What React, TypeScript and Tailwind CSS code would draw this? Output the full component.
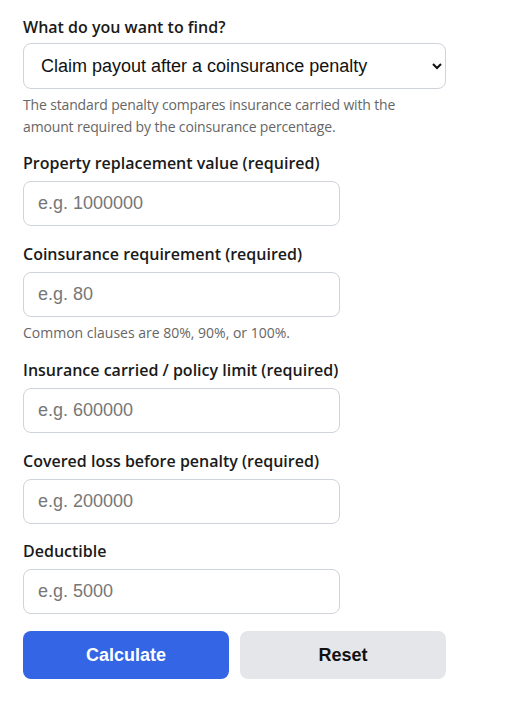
import React from "react";

const labelCls =
  "block text-[16px] leading-6 font-semibold text-[#1a1a1a] mb-1.5";
const inputCls =
  "block w-[317px] h-[45px] rounded-lg border border-[#cfd3da] bg-white px-[14px] text-[18px] text-[#111] placeholder:text-[#777] outline-none font-['Liberation_Sans',Arial,sans-serif]";
const helpCls = "text-[14px] leading-[22px] text-[#666]";

function Field({
  label,
  placeholder,
  help,
  className = "",
}: {
  label: string;
  placeholder: string;
  help?: string;
  className?: string;
}) {
  return (
    <div className={className}>
      <label className={labelCls}>{label}</label>
      <input type="text" inputMode="decimal" placeholder={placeholder} className={inputCls} />
      {help && <p className={`${helpCls} mt-[5px]`}>{help}</p>}
    </div>
  );
}

export default function App() {
  return (
    <div className="min-h-[712px] w-[530px] bg-white pl-[23px] pt-[15px] font-['Open_Sans',sans-serif]">
      <div className="w-[423px]">
        <label className={`${labelCls} !mb-1`}>What do you want to find?</label>
        <select
          defaultValue="payout"
          className="block w-[423px] h-[46px] rounded-lg border border-[#cfd3da] bg-white pl-[13px] pr-[11px] text-[18px] text-[#111] font-['Liberation_Sans',Arial,sans-serif] outline-none"
        >
          <option value="payout">Claim payout after a coinsurance penalty</option>
          <option value="penalty">Coinsurance penalty amount</option>
          <option value="required">Required insurance amount</option>
        </select>
        <p className={`${helpCls} mt-[5px] w-[400px] tracking-[-0.15px]`}>
          The standard penalty compares insurance carried with the amount required by the
          coinsurance percentage.
        </p>

        <Field
          className="mt-[13px]"
          label="Property replacement value (required)"
          placeholder="e.g. 1000000"
        />
        <Field
          className="mt-4"
          label="Coinsurance requirement (required)"
          placeholder="e.g. 80"
          help="Common clauses are 80%, 90%, or 100%."
        />
        <Field
          className="mt-[14px]"
          label="Insurance carried / policy limit (required)"
          placeholder="e.g. 600000"
        />
        <Field
          className="mt-4"
          label="Covered loss before penalty (required)"
          placeholder="e.g. 200000"
        />
        <Field className="mt-[15px]" label="Deductible" placeholder="e.g. 5000" />

        <div className="mt-[17px] grid grid-cols-2 gap-[11px] font-['Liberation_Sans',Arial,sans-serif]">
          <button
            type="button"
            className="h-[48px] rounded-lg bg-[#3465e4] text-[18px] font-bold text-white"
          >
            Calculate
          </button>
          <button
            type="button"
            className="h-[48px] rounded-lg bg-[#e5e6ea] text-[18px] font-bold text-[#111]"
          >
            Reset
          </button>
        </div>
      </div>
    </div>
  );
}
